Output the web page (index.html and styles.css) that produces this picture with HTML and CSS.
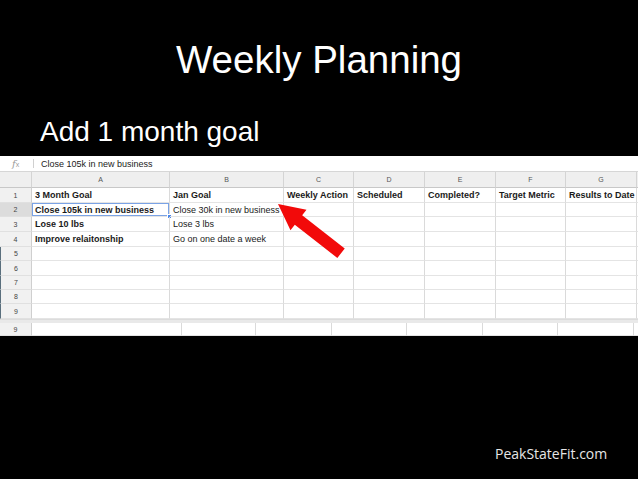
FILE: index.html
```html
<!DOCTYPE html>
<html>
<head>
<meta charset="utf-8">
<link rel="stylesheet" href="styles.css">
</head>
<body>
<div class="slide">
  <h1 class="title">Weekly Planning</h1>
  <h2 class="subtitle">Add 1 month goal</h2>
  <div class="sheet">
    <div class="fbar">
      <span class="fx"><i>f</i><span class="fxx">x</span></span>
      <span class="fsep"></span>
      <span class="ftext">Close 105k in new business</span>
    </div>
    <div class="grid">
      <div class="corner"></div>
      <div class="ch">A</div><div class="ch">B</div><div class="ch">C</div><div class="ch">D</div><div class="ch">E</div><div class="ch">F</div><div class="ch">G</div><div class="ch end"></div>

      <div class="rh">1</div>
      <div class="c b">3 Month Goal</div><div class="c b">Jan Goal</div><div class="c b">Weekly Action</div><div class="c b">Scheduled</div><div class="c b">Completed?</div><div class="c b">Target Metric</div><div class="c b">Results to Date</div><div class="c end"></div>

      <div class="rh sel">2</div>
      <div class="c b active">Close 105k in new business<span class="handle"></span></div><div class="c">Close 30k in new business</div><div class="c"></div><div class="c"></div><div class="c"></div><div class="c"></div><div class="c"></div><div class="c end"></div>

      <div class="rh">3</div>
      <div class="c b">Lose 10 lbs</div><div class="c">Lose 3 lbs</div><div class="c"></div><div class="c"></div><div class="c"></div><div class="c"></div><div class="c"></div><div class="c end"></div>

      <div class="rh">4</div>
      <div class="c b">Improve relaitonship</div><div class="c">Go on one date a week</div><div class="c"></div><div class="c"></div><div class="c"></div><div class="c"></div><div class="c"></div><div class="c end"></div>

      <div class="rh edge">5</div>
      <div class="c"></div><div class="c"></div><div class="c"></div><div class="c"></div><div class="c"></div><div class="c"></div><div class="c"></div><div class="c end"></div>

      <div class="rh edge">6</div>
      <div class="c"></div><div class="c"></div><div class="c"></div><div class="c"></div><div class="c"></div><div class="c"></div><div class="c"></div><div class="c end"></div>

      <div class="rh edge">7</div>
      <div class="c"></div><div class="c"></div><div class="c"></div><div class="c"></div><div class="c"></div><div class="c"></div><div class="c"></div><div class="c end"></div>

      <div class="rh edge">8</div>
      <div class="c"></div><div class="c"></div><div class="c"></div><div class="c"></div><div class="c"></div><div class="c"></div><div class="c"></div><div class="c end"></div>

      <div class="rh edge">9</div>
      <div class="c"></div><div class="c"></div><div class="c"></div><div class="c"></div><div class="c"></div><div class="c"></div><div class="c"></div><div class="c end"></div>
    </div>
    <div class="band"></div>
    <div class="grid2">
      <div class="rh">9</div>
      <div class="c"></div><div class="c"></div><div class="c"></div><div class="c"></div><div class="c"></div><div class="c"></div><div class="c"></div><div class="c end"></div>
    </div>
  </div>
  <div class="footer">PeakStateFit.com</div>
  <svg class="arrow" width="638" height="479" viewBox="0 0 638 479">
    <polygon transform="translate(278 204) rotate(38)" points="0,0 26,-13 26,-6 80,-6 80,6 26,6 26,13" fill="#f20a0a"/>
  </svg>
</div>
</body>
</html>
```

FILE: styles.css
```css
* { box-sizing: border-box; }
html, body { margin: 0; padding: 0; background: #000; }
.slide {
  position: relative;
  width: 638px;
  height: 479px;
  overflow: hidden;
  background: #000;
  font-family: "Liberation Sans", Arial, sans-serif;
}
.title {
  margin: 0;
  padding-top: 38px;
  text-align: center;
  color: #fff;
  font-weight: normal;
  font-size: 38.5px;
  line-height: 44px;
}
.subtitle {
  margin: 34px 0 0 0;
  padding-left: 40px;
  color: #fff;
  font-weight: normal;
  font-size: 28px;
  line-height: 32px;
}
.sheet {
  margin-top: 8px;
  background: #fff;
  color: #111;
}
.fbar {
  display: flex;
  align-items: center;
  height: 16px;
  border-bottom: 1px solid #d6d6d6;
  font-size: 9px;
}
.fx {
  width: 33px;
  padding-left: 12px;
  color: #9a9a9a;
  font-family: "DejaVu Serif", serif;
  font-size: 10px;
}
.fx i { font-style: italic; }
.fxx { font-family: "Liberation Sans", sans-serif; font-size: 7px; }
.fsep {
  width: 1px;
  height: 9px;
  background: #d0d0d0;
}
.ftext { padding-left: 7px; color: #222; }
.grid {
  display: grid;
  grid-template-columns: 32px 138px 114px 70px 71px 71px 70px 71px 1fr;
  grid-template-rows: 16px 15px 14px 15px 15px 14px 15px 14px 14px 15px;
}
.grid2 {
  display: grid;
  grid-template-columns: 32px 150px 74px 76px 75px 76px 75px 76px 1fr;
  grid-template-rows: 13px;
}
.band { height: 4px; background: #e9e9e9; border-top: 1px solid #dcdcdc; }
.corner, .ch {
  background: #efefef;
  border-right: 1px solid #d4d4d4;
  border-bottom: 1px solid #c8c8c8;
}
.ch {
  display: flex;
  align-items: center;
  justify-content: center;
  font-size: 7px;
  color: #555;
}
.rh {
  display: flex;
  align-items: center;
  justify-content: center;
  background: #f1f1f1;
  border-right: 1px solid #cfcfcf;
  border-bottom: 1px solid #e0e0e0;
  font-size: 7px;
  color: #444;
}
.rh.sel { background: #dcdcdc; }
.rh.edge { border-left: 1px solid #5a6f7d; }
.c {
  position: relative;
  display: flex;
  align-items: center;
  padding-left: 3px;
  border-right: 1px solid #dadada;
  border-bottom: 1px solid #e4e4e4;
  font-size: 9px;
  white-space: nowrap;
  color: #1a1a1a;
}
.c.b { font-weight: bold; }
.end { border-right: none; }
.c.active { box-shadow: inset 0 0 0 1px #7aa3e6; }
.handle {
  position: absolute;
  right: -3px;
  bottom: -3px;
  width: 5px;
  height: 5px;
  background: #4a86e8;
  border: 1px solid #fff;
}
.footer {
  margin-top: 108px;
  padding-left: 495px;
  font-family: "Open Sans", sans-serif;
  font-size: 14px;
  line-height: 19px;
  color: #e6e6e6;
}
.arrow {
  position: absolute;
  left: 0;
  top: 0;
  pointer-events: none;
}
```
